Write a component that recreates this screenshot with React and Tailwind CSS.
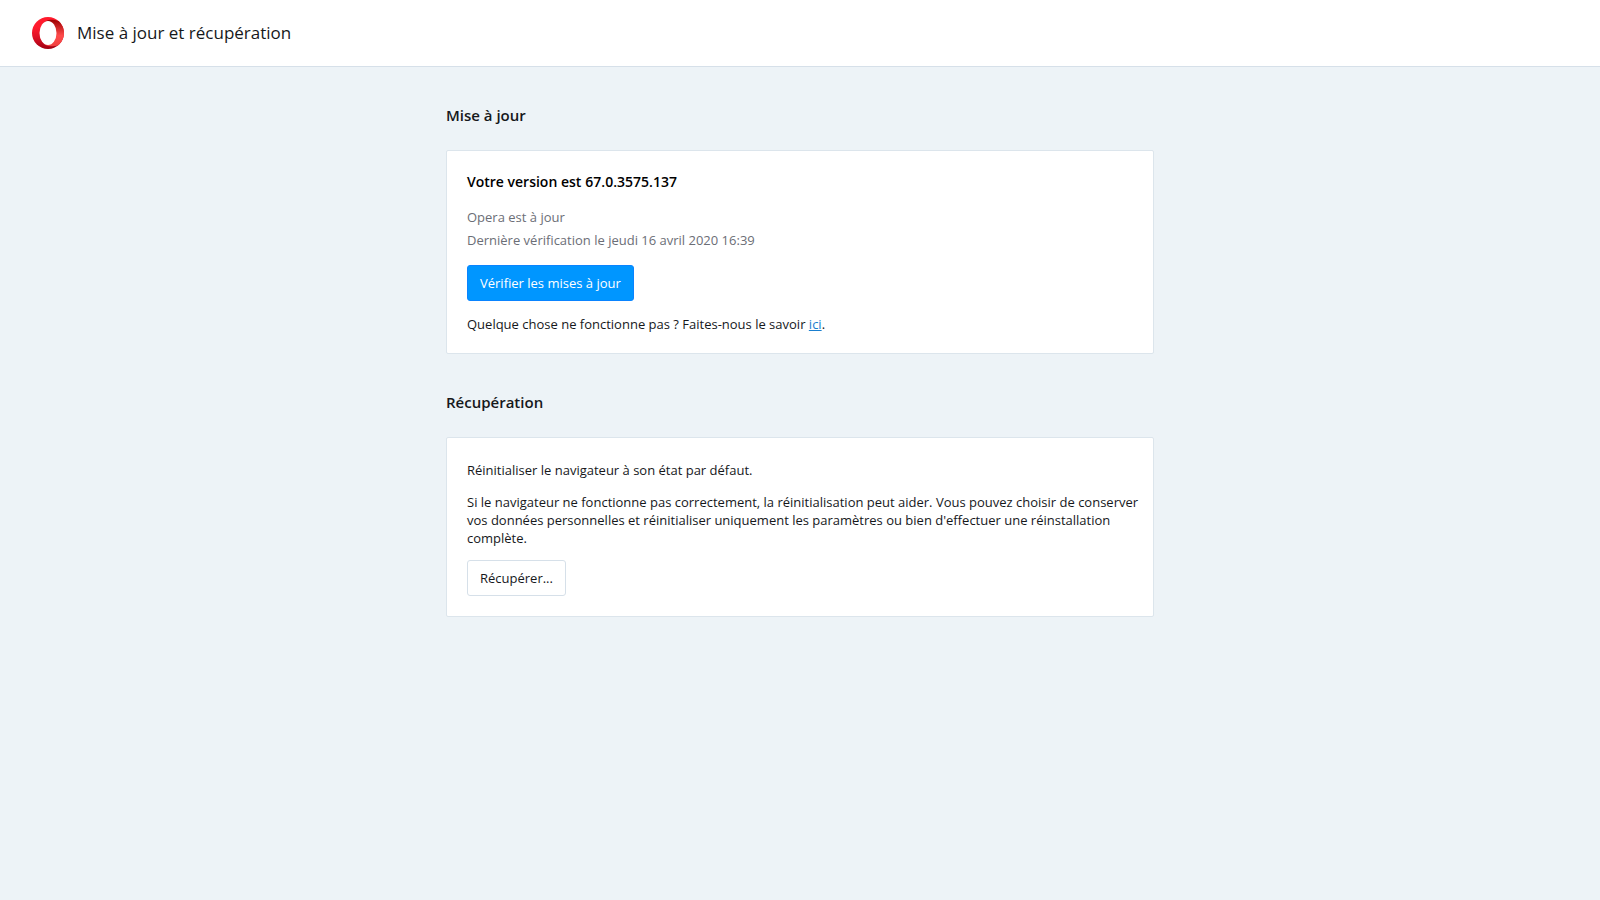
function OperaLogo() {
  return (
    <svg viewBox="0 0 32 32" className="size-8 shrink-0" aria-hidden="true">
      <defs>
        <linearGradient id="ring" x1="0.4" y1="0" x2="0.45" y2="1">
          <stop offset="0.3" stopColor="#ff1b2d" />
          <stop offset="0.6" stopColor="#e01226" />
          <stop offset="1" stopColor="#a00012" />
        </linearGradient>
        <linearGradient id="fold" x1="0" y1="0" x2="0" y2="1">
          <stop offset="0" stopColor="#9c0000" />
          <stop offset="0.6" stopColor="#ff4b4b" />
          <stop offset="1" stopColor="#f04040" />
        </linearGradient>
      </defs>
      <circle cx="16" cy="16" r="16" fill="url(#ring)" />
      <path
        fill="url(#fold)"
        d="M10.67 7C12.6 4.3 15.5 2.7 18.6 2.7C21.5 2.7 24.3 3 26.67 4.07A16 16 0 0 1 26.67 27.93C24.3 29 21.5 29.3 18.6 29.3C15.5 29.3 12.6 27.7 10.67 25Z"
      />
      <ellipse cx="16" cy="16" rx="8.5" ry="12" fill="#fff" />
    </svg>
  );
}

function Section({ title, children }) {
  return (
    <section className="pt-9">
      <h2 className="text-[15px] leading-6 font-semibold">{title}</h2>
      <div className="mt-[23px] rounded-xs border border-[#dce5ec] bg-white py-5 pr-2 pl-5">{children}</div>
    </section>
  );
}

export default function App() {
  return (
    <div className="min-h-screen bg-[#edf3f7] font-['Open_Sans','Noto_Sans',sans-serif] text-[13px] leading-[18px] text-[#16181b]">
      <header className="flex items-center gap-[13px] border-b border-[#d6e0e9] bg-white px-8 py-[17px]">
        <OperaLogo />
        <h1 className="text-[17px] leading-8">Mise à jour et récupération</h1>
      </header>
      <main className="mx-auto max-w-[708px]">
        <Section title="Mise à jour">
          <h3 className="flex gap-1 text-[14px] leading-[22px] font-semibold text-black">
            <span>Votre version est</span>
            <span>67.0.3575.137</span>
          </h3>
          <div className="mt-[13px] leading-[23px] text-[#6b6e76]">
            <p>Opera est à jour</p>
            <p>Dernière vérification le jeudi 16 avril 2020 16:39</p>
          </div>
          <button
            type="button"
            className="mt-[13px] block h-9 rounded-[3px] border border-[#0a84ff] bg-[#0096ff] px-3 text-white"
          >
            Vérifier les mises à jour
          </button>
          <p className="mt-[14px]">
            Quelque chose ne fonctionne pas ? Faites-nous le savoir{" "}
            <a href="#signaler" className="text-[#1a7fcf] underline">
              ici
            </a>
            .
          </p>
        </Section>
        <Section title="Récupération">
          <p className="leading-6">Réinitialiser le navigateur à son état par défaut.</p>
          <p className="mt-[11px]">
            Si le navigateur ne fonctionne pas correctement, la réinitialisation peut aider. Vous pouvez choisir de
            conserver vos données personnelles et réinitialiser uniquement les paramètres ou bien d'effectuer une
            réinstallation complète.
          </p>
          <button type="button" className="mt-[13px] block h-9 rounded-[3px] border border-[#d6e0e9] bg-white px-3">
            Récupérer...
          </button>
        </Section>
      </main>
    </div>
  );
}
